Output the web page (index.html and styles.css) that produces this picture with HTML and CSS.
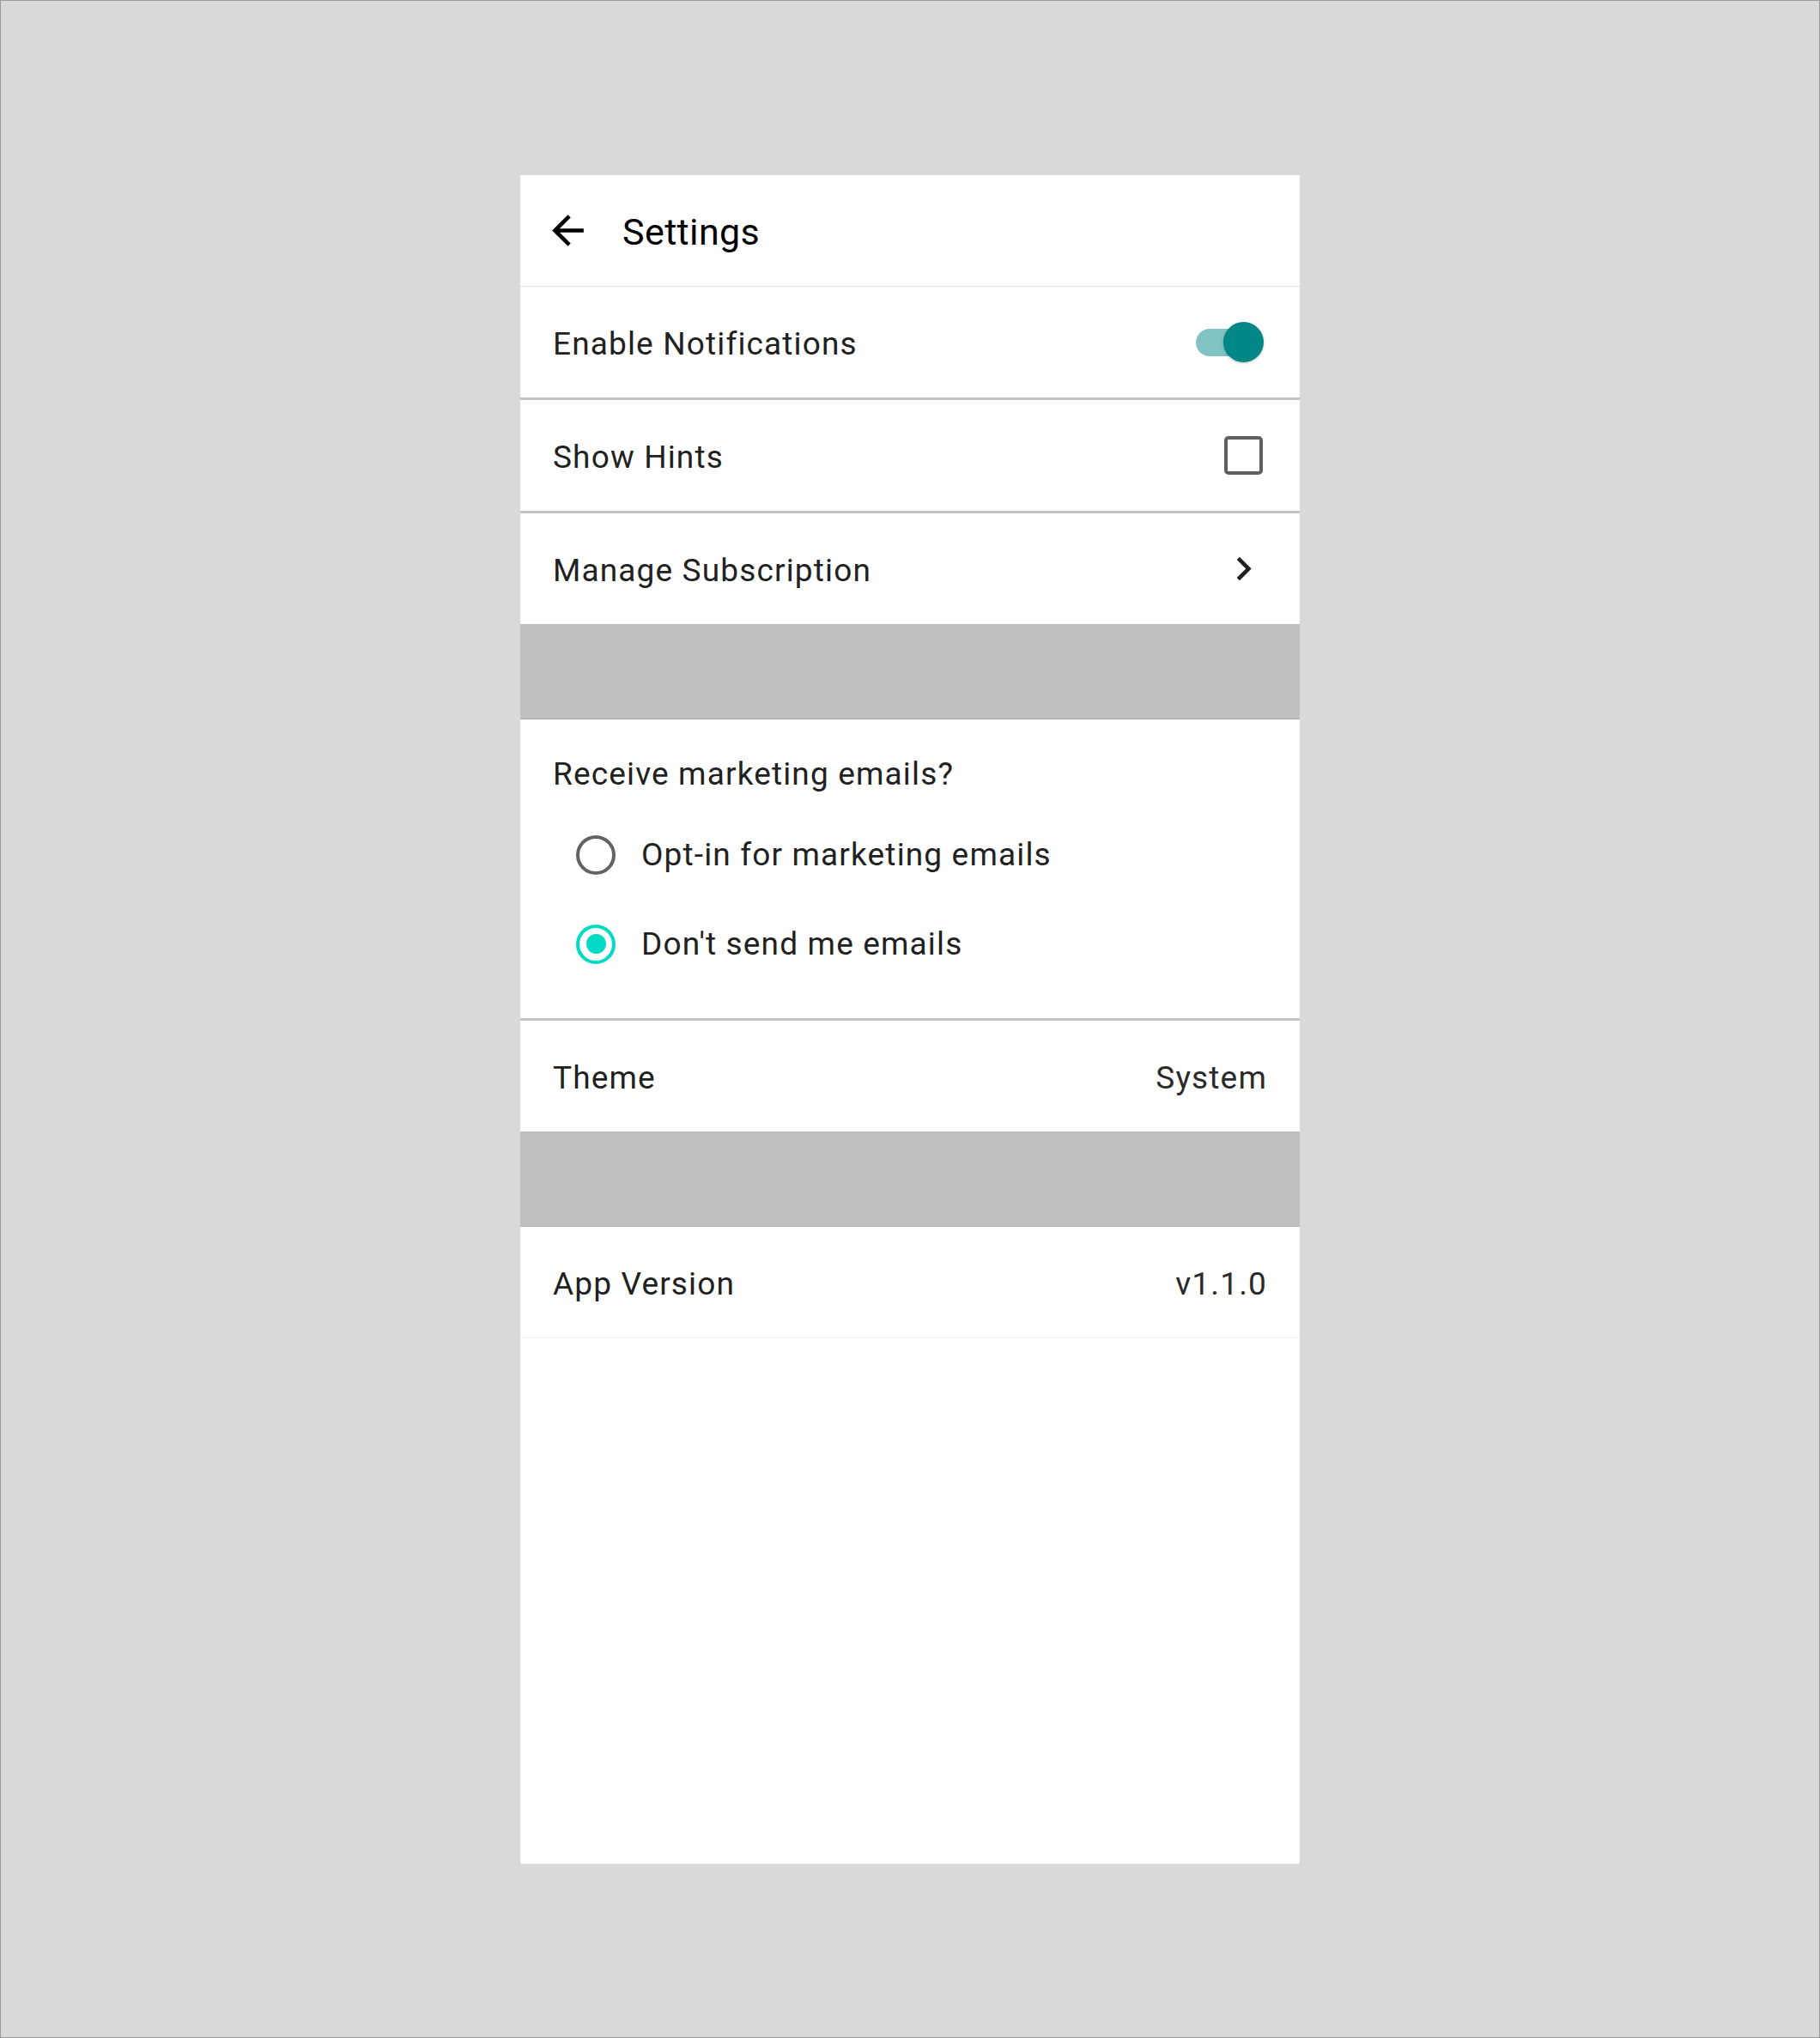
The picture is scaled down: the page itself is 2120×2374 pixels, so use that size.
FILE: index.html
```html
<!DOCTYPE html>
<html lang="en">
<head>
<meta charset="utf-8">
<title>Settings</title>
<link rel="stylesheet" href="styles.css">
</head>
<body>
<div class="page">
  <div class="screen">
    <header class="appbar">
      <svg class="icon back" viewBox="0 0 24 24" aria-hidden="true"><path d="M20 11H7.83l5.59-5.59L12 4l-8 8 8 8 1.41-1.41L7.83 13H20v-2z"/></svg>
      <h1 class="title">Settings</h1>
    </header>

    <div class="row row-thick">
      <span class="label">Enable Notifications</span>
      <span class="switch"><span class="track"></span><span class="thumb"></span></span>
    </div>

    <div class="row row-thick">
      <span class="label">Show Hints</span>
      <span class="checkbox"></span>
    </div>

    <div class="row">
      <span class="label">Manage Subscription</span>
      <svg class="icon chevron" viewBox="0 0 24 24" aria-hidden="true"><path d="M10 6L8.59 7.41 13.17 12l-4.58 4.59L10 18l6-6z"/></svg>
    </div>

    <div class="spacer"></div>

    <div class="radio-section">
      <div class="question">Receive marketing emails?</div>
      <div class="radio-row">
        <span class="radio"></span>
        <span class="label">Opt-in for marketing emails</span>
      </div>
      <div class="radio-row">
        <span class="radio checked"></span>
        <span class="label">Don't send me emails</span>
      </div>
    </div>

    <div class="row">
      <span class="label">Theme</span>
      <span class="value">System</span>
    </div>

    <div class="spacer"></div>

    <div class="row row-light">
      <span class="label">App Version</span>
      <span class="value">v1.1.0</span>
    </div>
  </div>
</div>
</body>
</html>
```

FILE: styles.css
```css
* { box-sizing: border-box; }

html, body {
  margin: 0;
  padding: 0;
}

body {
  font-family: Roboto, "Noto Sans", "Liberation Sans", sans-serif;
  background: #d9d9d9;
}

.page {
  width: 2120px;
  height: 2374px;
  border: 1px solid #9a9a9a;
  background: #d9d9d9;
  display: flex;
  align-items: center;
  justify-content: center;
}

.screen {
  width: 908px;
  height: 1967px;
  background: #ffffff;
  display: flex;
  flex-direction: column;
}

.appbar {
  height: 130px;
  flex: none;
  display: flex;
  align-items: center;
  padding-left: 28px;
  border-bottom: 1px solid #dcdcdc;
}

.icon {
  width: 55px;
  height: 55px;
  flex: none;
  fill: #000000;
}

.title {
  margin: 0 0 0 36px;
  padding-top: 3px;
  font-size: 43px;
  font-weight: 400;
  color: #000000;
  letter-spacing: 0.4px;
}

.row {
  height: 129px;
  flex: none;
  display: flex;
  align-items: center;
  justify-content: space-between;
  padding: 0 38px;
}

.row > .label,
.row > .value {
  padding-top: 5px;
}

.row-thick {
  height: 132px;
  border-bottom: 3px solid #c2c2c2;
}

.row-light {
  height: 130px;
  border-bottom: 1px solid #eeeeee;
}

.label,
.value,
.question {
  font-size: 37px;
  letter-spacing: 1.15px;
  color: #212121;
}

.value {
  color: #2a2a2a;
}

.switch {
  position: relative;
  width: 79px;
  height: 47px;
  margin-right: 4px;
  flex: none;
}

.switch .track {
  position: absolute;
  left: 0;
  top: 8px;
  width: 76px;
  height: 32px;
  border-radius: 16px;
  background: #80c3c2;
}

.switch .thumb {
  position: absolute;
  right: 0;
  top: 0;
  width: 47px;
  height: 47px;
  border-radius: 50%;
  background: #018786;
  box-shadow: 0 1px 3px rgba(0, 0, 0, 0.25);
}

.checkbox {
  width: 45px;
  height: 45px;
  margin-right: 5px;
  border: 4.5px solid #5f5f5f;
  border-radius: 5px;
  flex: none;
}

.chevron {
  fill: #212121;
}

.spacer {
  height: 111px;
  flex: none;
  background: #bfbfbf;
  border-bottom: 1px solid #ababab;
}

.radio-section {
  height: 351px;
  flex: none;
  padding: 37px 38px 0;
  border-bottom: 3px solid #c4c4c4;
}

.question {
  height: 54px;
  line-height: 54px;
  margin-bottom: 15px;
}

.radio-row {
  height: 104px;
  display: flex;
  align-items: center;
  padding-left: 27px;
}

.radio {
  width: 46px;
  height: 46px;
  border-radius: 50%;
  border: 4.6px solid #636363;
  margin-right: 30px;
  flex: none;
  display: flex;
  align-items: center;
  justify-content: center;
}

.radio.checked {
  border-color: #03dac5;
}

.radio.checked::after {
  content: "";
  width: 23px;
  height: 23px;
  border-radius: 50%;
  background: #03dac5;
}
```
